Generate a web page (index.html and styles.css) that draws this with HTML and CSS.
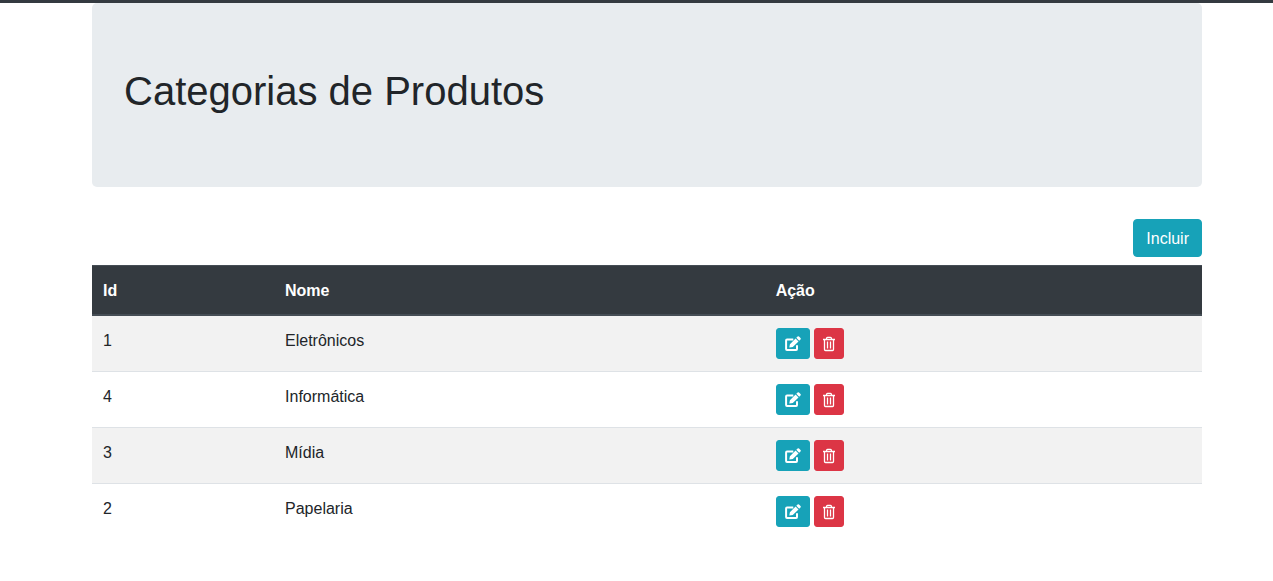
FILE: index.html
```html
<!DOCTYPE html>
<html lang="pt-BR">
<head>
<meta charset="utf-8">
<title>Categorias de Produtos</title>
<link rel="stylesheet" href="styles.css">
</head>
<body>
<svg class="sprite" aria-hidden="true">
  <symbol id="edit" viewBox="0 0 16 16">
    <path d="M8.3 3.5H2Q1.1 3.5 1.1 4.4V13.1Q1.1 14 2 14H11.1Q12 14 12 13.1V9.2" fill="none" stroke="currentColor" stroke-width="2"/>
    <path d="M4.3 11.6 4.9 8.2 10.6 2.5 13.5 5.4 7.8 11.1ZM11.3 1.8 12.6.5Q13.3-.1 14 .5L15.5 2Q16.1 2.7 15.5 3.4L14.2 4.7Z" fill="currentColor"/>
  </symbol>
  <symbol id="trash" viewBox="0 0 12 16">
    <path d="M0 3.5H12M3.6 3.5V2.2Q3.6 1.3 4.5 1.3H7.5Q8.4 1.3 8.4 2.2V3.5M1.5 3.5V13.5Q1.5 14.5 2.5 14.5H9.5Q10.5 14.5 10.5 13.5V3.5M4.5 5.5V12.5M7.5 5.5V12.5" fill="none" stroke="currentColor" stroke-width="1.3"/>
  </symbol>
</svg>
<header class="topbar"></header>
<main class="container">
  <section class="jumbotron">
    <h1>Categorias de Produtos</h1>
  </section>
  <div class="toolbar">
    <button class="btn btn-info" type="button">Incluir</button>
  </div>
  <table class="table">
    <thead>
      <tr><th class="col-id" scope="col">Id</th><th class="col-name" scope="col">Nome</th><th scope="col">Ação</th></tr>
    </thead>
    <tbody>
      <tr>
        <td>1</td><td>Eletrônicos</td>
        <td><div class="actions">
          <button class="btn btn-sm btn-info" type="button" aria-label="Editar Eletrônicos"><svg class="icon-edit"><use href="#edit"/></svg></button>
          <button class="btn btn-sm btn-danger" type="button" aria-label="Excluir Eletrônicos"><svg class="icon-trash"><use href="#trash"/></svg></button>
        </div></td>
      </tr>
      <tr>
        <td>4</td><td>Informática</td>
        <td><div class="actions">
          <button class="btn btn-sm btn-info" type="button" aria-label="Editar Informática"><svg class="icon-edit"><use href="#edit"/></svg></button>
          <button class="btn btn-sm btn-danger" type="button" aria-label="Excluir Informática"><svg class="icon-trash"><use href="#trash"/></svg></button>
        </div></td>
      </tr>
      <tr>
        <td>3</td><td>Mídia</td>
        <td><div class="actions">
          <button class="btn btn-sm btn-info" type="button" aria-label="Editar Mídia"><svg class="icon-edit"><use href="#edit"/></svg></button>
          <button class="btn btn-sm btn-danger" type="button" aria-label="Excluir Mídia"><svg class="icon-trash"><use href="#trash"/></svg></button>
        </div></td>
      </tr>
      <tr>
        <td>2</td><td>Papelaria</td>
        <td><div class="actions">
          <button class="btn btn-sm btn-info" type="button" aria-label="Editar Papelaria"><svg class="icon-edit"><use href="#edit"/></svg></button>
          <button class="btn btn-sm btn-danger" type="button" aria-label="Excluir Papelaria"><svg class="icon-trash"><use href="#trash"/></svg></button>
        </div></td>
      </tr>
    </tbody>
  </table>
</main>
</body>
</html>
```
FILE: styles.css
```css
*, *::before, *::after { box-sizing: border-box; }

body {
  margin: 0;
  background: #fff;
  color: #212529;
  font: 16px/26px "Liberation Sans", Arial, sans-serif;
}

.sprite { display: none; }

.topbar {
  height: 3px;
  background: #343a40;
}

.container { padding: 0 71px 0 92px; }

.jumbotron {
  margin-bottom: 32px;
  padding: 64px 32px;
  border-radius: 5px;
  background: #e8ecef;
}

.jumbotron h1 {
  margin: 0 0 8px;
  font-size: 40px;
  font-weight: 400;
  line-height: 48px;
}

.toolbar {
  display: flex;
  justify-content: flex-end;
  margin-bottom: 8px;
}

.btn {
  padding: 6px 12px 4px;
  border: 1px solid transparent;
  border-radius: 4px;
  color: #fff;
  font: inherit;
  cursor: pointer;
}

.btn-sm {
  display: flex;
  align-items: center;
  height: 31px;
  padding: 4px 8px;
  border-radius: 3px;
}

.btn-info { background: #17a2b8; border-color: #17a2b8; }
.btn-danger { background: #dc3545; border-color: #dc3545; }

.icon-edit { width: 16px; height: 16px; }
.icon-trash { width: 12px; height: 16px; }

.table {
  width: 100%;
  border-spacing: 0;
  table-layout: fixed;
}

.col-id { width: 16.4%; }
.col-name { width: 44.2%; }

.table th,
.table td {
  padding: 12px 11px;
  text-align: left;
  vertical-align: top;
}

.table th {
  padding-bottom: 10px;
  border-top: 1px solid #454d55;
  border-bottom: 2px solid #454d55;
  background: #343a40;
  color: #fff;
}

.table td { border-bottom: 1px solid #dee2e6; }
.table tbody tr:last-child td { border-bottom: 0; }
.table tbody tr:nth-child(odd) { background: #f2f2f2; }

.actions { display: flex; gap: 4px; }
```
